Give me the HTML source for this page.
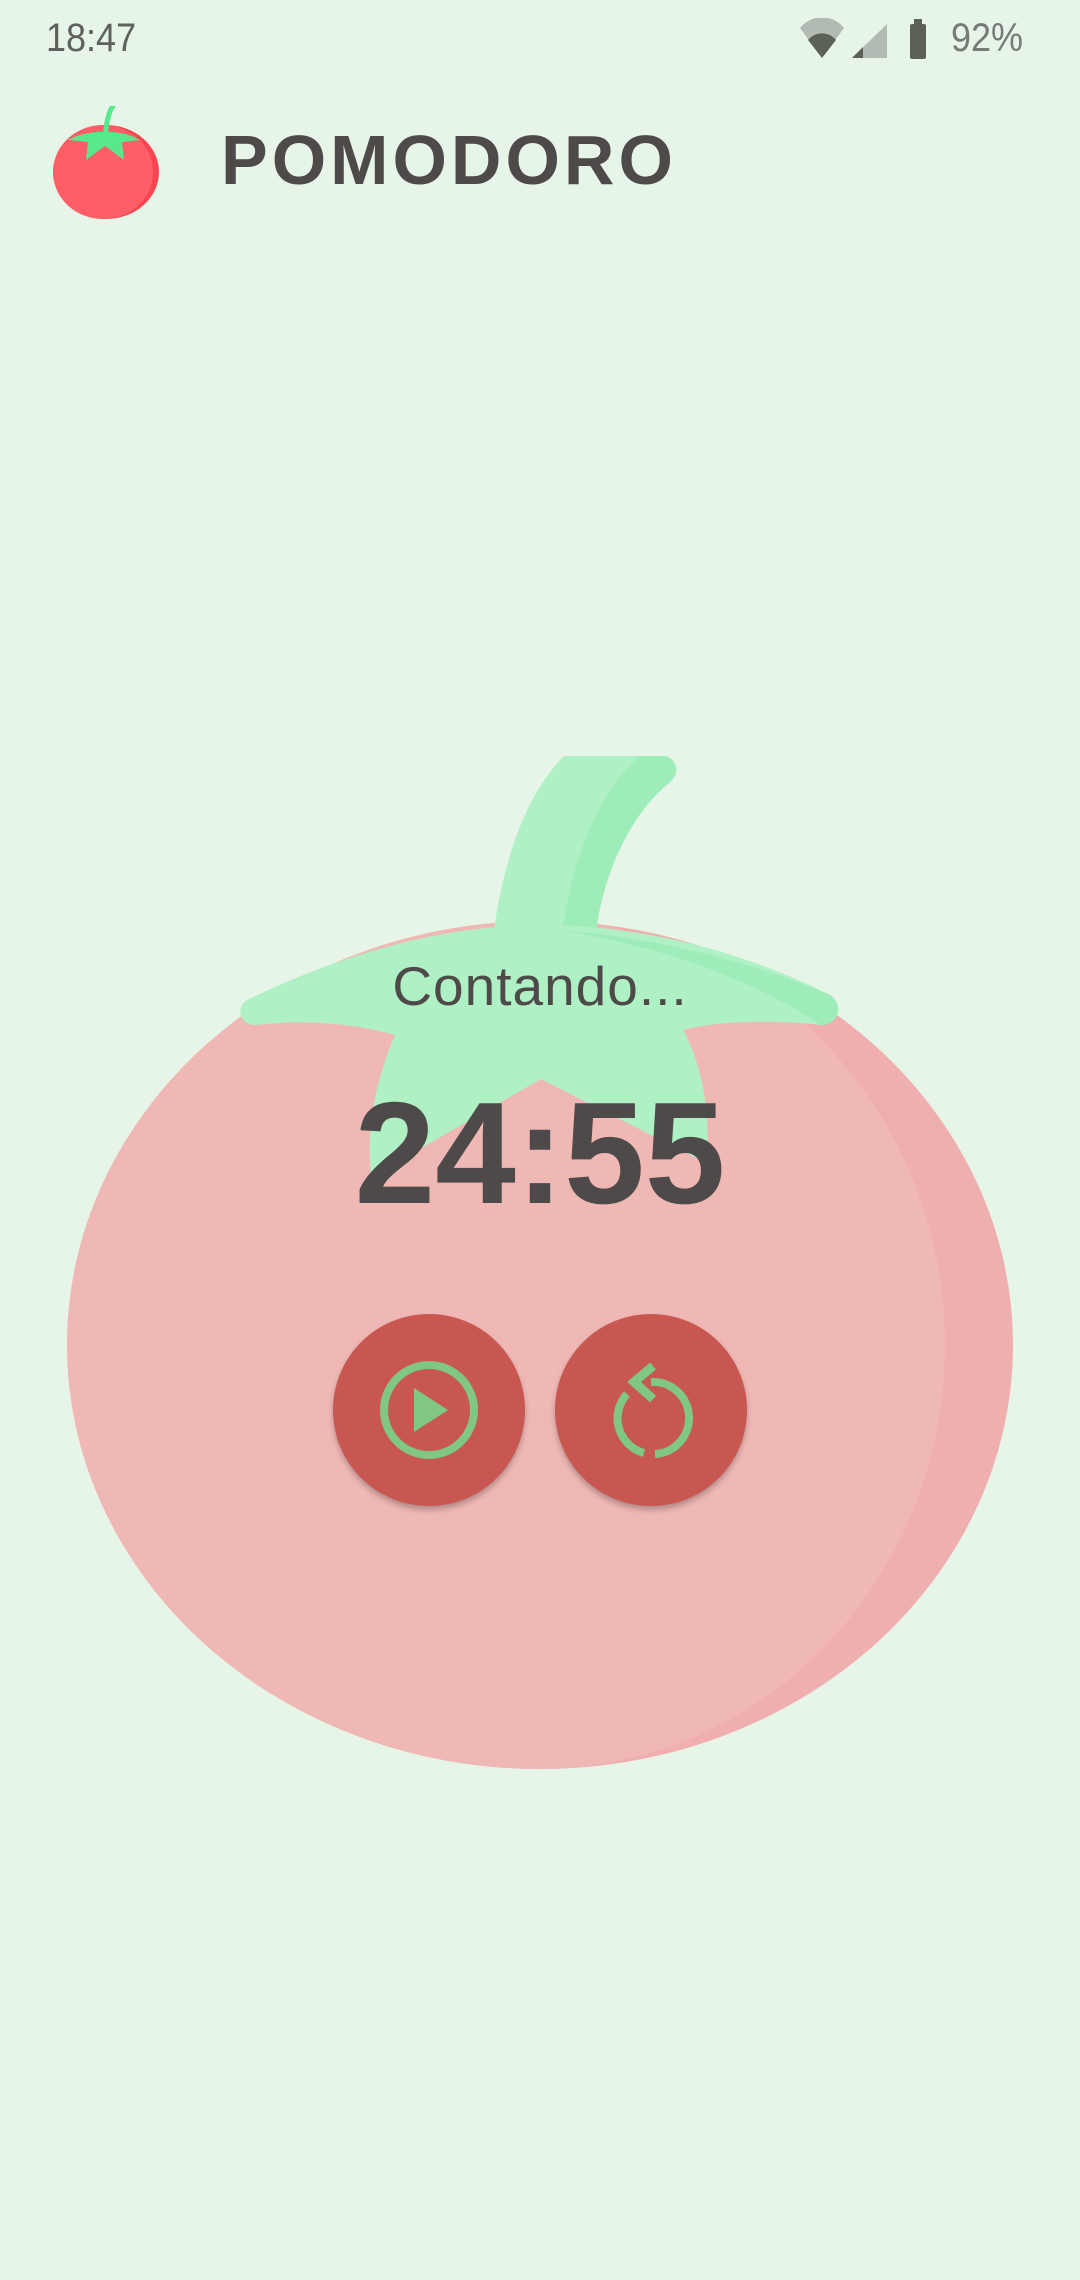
<!DOCTYPE html>
<html><head><meta charset="utf-8"><style>
html,body{margin:0;padding:0;}
body{width:1080px;height:2280px;background:#e7f5e9;position:relative;overflow:hidden;font-family:"Liberation Sans",sans-serif;}
.t{position:absolute;white-space:nowrap;}
</style></head><body>
<div class="t" style="left:46px;top:16px;font-size:40px;color:#5f625c;transform:scaleX(0.9);transform-origin:left;">18:47</div>
<svg style="position:absolute;left:795px;top:18px" width="150" height="45" viewBox="0 0 150 45">
<path d="M5 10 A28 28 0 0 1 49 10 L27 40 Z" fill="#b2bbb2"/>
<path d="M13 22 A18 18 0 0 1 41 22 L27 40 Z" fill="#5c6158"/>
<path d="M57 40 L92 6 L92 40 Z" fill="#b2bbb2"/>
<path d="M57 40 L68 29 L68 40 Z" fill="#5c6158"/>
<rect x="119" y="1" width="8" height="6" fill="#5c6158"/>
<rect x="115" y="6" width="16" height="35" rx="2" fill="#5c6158"/>
</svg>
<div class="t" style="left:951px;top:16px;font-size:40px;color:#777b75;transform:scaleX(0.9);transform-origin:left;">92%</div>

<svg style="position:absolute;left:50px;top:100px" width="120" height="125" viewBox="0 0 120 125">
<ellipse cx="56" cy="72" rx="53" ry="47" fill="#f94452"/>
<ellipse cx="53" cy="72" rx="50" ry="47" fill="#fe5f67"/>
<path d="M53 40 C53 25 56 12 60 6 L66 6 C61 12 58 25 58 40 Z" fill="#56e88a"/>
<path d="M18 40 C35 30 70 28 90 40 L72 42 L74 60 L55 46 L36 60 L38 42 Z" fill="#56e88a"/>
</svg>
<div class="t" style="left:221px;top:120px;font-size:70px;font-weight:bold;color:#4e4a4a;letter-spacing:4px;">POMODORO</div>

<svg style="position:absolute;left:0;top:700px" width="1080" height="1100" viewBox="0 700 1080 1100">
<ellipse cx="540" cy="1345" rx="473" ry="424" fill="#efafaf"/>
<path d="M540 921 A473 424 0 0 0 540 1769 A405 424 0 0 0 945 1345 A405 424 0 0 0 540 921 Z" fill="#f0b8b5"/>
<path d="M494 930 C505 850 530 790 564 756 L663 756 C675 756 682 772 670 782 C630 815 605 870 596 930 Z" fill="#aff0c5"/>
<path d="M562 930 C575 850 600 790 640 756 L663 756 C675 756 682 772 670 782 C630 815 605 870 596 930 Z" fill="#9eedb9"/>
<path d="M247 1000 C350 950 450 925 540 925 C650 925 750 955 830 995 C845 1005 838 1025 821 1025 C780 1020 720 1020 683 1030 C700 1060 712 1110 706 1163 L541 1079 L371 1177 C365 1120 380 1070 395 1035 C350 1022 300 1020 255 1025 C240 1025 235 1008 247 1000 Z" fill="#aff0c5"/>
<path d="M560 930 C680 940 770 970 830 995 C845 1005 838 1025 821 1025 C760 985 680 950 560 930 Z" fill="#9eedb9"/>
</svg>

<div class="t" style="left:0;width:1080px;text-align:center;top:954px;font-size:55px;color:#4e4a4a;letter-spacing:1px;">Contando...</div>
<div class="t" style="left:0;width:1080px;text-align:center;top:1070px;font-size:145px;font-weight:bold;color:#4e4a4a;">24:55</div>

<div style="position:absolute;left:333px;top:1314px;width:192px;height:192px;border-radius:50%;background:#c85752;box-shadow:0 4px 6px rgba(0,0,0,0.25);"></div>
<div style="position:absolute;left:555px;top:1314px;width:192px;height:192px;border-radius:50%;background:#c85752;box-shadow:0 4px 6px rgba(0,0,0,0.25);"></div>
<svg style="position:absolute;left:333px;top:1314px" width="192" height="192" viewBox="0 0 192 192">
<circle cx="96" cy="96" r="45" fill="none" stroke="#7fc782" stroke-width="8"/>
<path d="M81 74 L81 118 L115 96 Z" fill="#7fc782"/>
</svg>
<svg style="position:absolute;left:555px;top:1314px" width="192" height="192" viewBox="0 0 192 192">
<path d="M96 68 A36 36 0 1 1 100 140" fill="none" stroke="#7fc782" stroke-width="8"/>
<path d="M72 80 A36 36 0 0 0 89 139" fill="none" stroke="#7fc782" stroke-width="8"/>
<path d="M98 52 L79 68 L98 85" fill="none" stroke="#7fc782" stroke-width="9"/>
</svg>
</body></html>
